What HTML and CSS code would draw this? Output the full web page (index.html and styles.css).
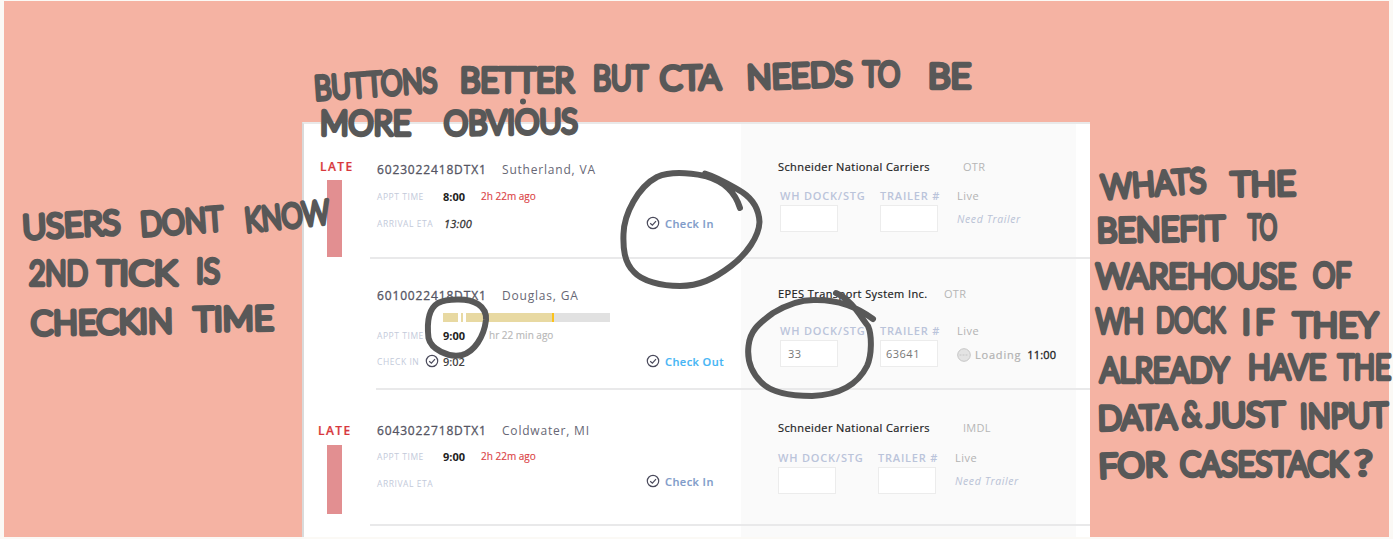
FILE: index.html
```html
<!DOCTYPE html>
<html lang="en">
<head>
<meta charset="utf-8">
<title>Dock schedule review</title>
<link rel="stylesheet" href="styles.css">
</head>
<body>
<svg class="defs" aria-hidden="true">
  <symbol id="tick" viewBox="0 0 14 14"><circle cx="7" cy="7" r="5.7"/><path d="M4.2 7.2 6.4 9.2 10 5.1"/></symbol>
</svg>
<main class="board">
  <section class="panel">
    <article class="row first">
      <div class="status"><span class="late">LATE</span><i class="late-bar"></i></div>
      <div class="info">
        <div class="title"><b>6023022418DTX1</b><span>Sutherland, VA</span></div>
        <div class="line"><span class="label">APPT TIME</span><b class="time">8:00</b><span class="ago">2h 22m ago</span></div>
        <div class="line eta"><span class="label">ARRIVAL ETA</span><em>13:00</em></div>
      </div>
      <div class="action"><svg class="tick"><use href="#tick"/></svg><a>Check In</a></div>
      <div class="carrier">
        <div class="name"><b>Schneider National Carriers</b><span>OTR</span></div>
        <div class="fields">
          <label>WH DOCK/STG<span class="box"></span></label>
          <label>TRAILER #<span class="box"></span></label>
          <div class="load"><span>Live</span><em>Need Trailer</em></div>
        </div>
      </div>
    </article>
    <article class="row second">
      <div class="status"></div>
      <div class="info">
        <div class="title"><b>6010022418DTX1</b><span>Douglas, GA</span></div>
        <div class="progress"><i class="p1"></i><i class="p2"></i><i class="p3"></i><i class="p4"></i></div>
        <div class="line"><span class="label">APPT TIME</span><b class="time">9:00</b><span class="ago muted">hr 22 min ago</span></div>
        <div class="line checked"><span class="label">CHECK IN</span><svg class="tick"><use href="#tick"/></svg><b class="time soft">9:02</b></div>
      </div>
      <div class="action"><svg class="tick"><use href="#tick"/></svg><a class="out">Check Out</a></div>
      <div class="carrier">
        <div class="name"><b>EPES Transport System Inc.</b><span>OTR</span></div>
        <div class="fields">
          <label>WH DOCK/STG<span class="box">33</span></label>
          <label>TRAILER #<span class="box num">63641</span></label>
          <div class="load"><span>Live</span><div class="loading"><svg class="globe" viewBox="0 0 14 14"><circle cx="7" cy="7" r="6.3"/><path d="M2.5 7h9" stroke-dasharray="2 1"/></svg><span>Loading</span><b>11:00</b></div></div>
        </div>
      </div>
    </article>
    <article class="row third">
      <div class="status"><span class="late">LATE</span><i class="late-bar"></i></div>
      <div class="info">
        <div class="title"><b>6043022718DTX1</b><span>Coldwater, MI</span></div>
        <div class="line"><span class="label">APPT TIME</span><b class="time">9:00</b><span class="ago">2h 22m ago</span></div>
        <div class="line eta"><span class="label">ARRIVAL ETA</span></div>
      </div>
      <div class="action"><svg class="tick"><use href="#tick"/></svg><a>Check In</a></div>
      <div class="carrier">
        <div class="name"><b>Schneider National Carriers</b><span>IMDL</span></div>
        <div class="fields">
          <label>WH DOCK/STG<span class="box"></span></label>
          <label>TRAILER #<span class="box"></span></label>
          <div class="load"><span>Live</span><em>Need Trailer</em></div>
        </div>
      </div>
    </article>
    <div class="row tail"></div>
  </section>
</main>
<svg class="notes" viewBox="0 0 1393 539">
  <g class="ink">
    <path d="M705 173.500C720 178 733 187 742 192C754 200 759 211 759.500 222C759 236 747 254 731 266C714 279 699 286 680 286C661 286 642 281 634 272C624 262 623 248 623.500 234C624 214 638 187 657 177C671 171 690 173 705 176C725 182 735 192 740 208"/>
    <path d="M457 299.500C474 299 487 306 486 320C484 337 474 352 462 355C448 358 431 349 428.500 338C427 325 428 309 438 303C444 300 450 299.500 457 299.500"/>
    <path d="M836 293C852 300 860 316 868 326C872 335 872 355 867 366C857 386 837 395 812 396C790 396 771 393 761 382C751 372 747 359 748.500 346C750 331 758 324 773 313C786 305 801 299 817 300C840 300 857 307 873 319"/>
    <path d="M523 101.500v.1"/>
  </g>
  <g class="hand">
    <text transform="translate(315 100) rotate(-4)" textLength="123" lengthAdjust="spacingAndGlyphs">BUTTONS</text>
    <text transform="translate(460 92)" textLength="114" lengthAdjust="spacingAndGlyphs">BETTER</text>
    <text transform="translate(593 90)" textLength="55" lengthAdjust="spacingAndGlyphs">BUT</text>
    <text transform="translate(660 90) rotate(-1)" textLength="61" lengthAdjust="spacingAndGlyphs">CTA</text>
    <text transform="translate(747 89) rotate(-2)" textLength="106" lengthAdjust="spacingAndGlyphs">NEEDS</text>
    <text transform="translate(863 86)" textLength="37" lengthAdjust="spacingAndGlyphs">TO</text>
    <text transform="translate(928 88)" textLength="43" lengthAdjust="spacingAndGlyphs">BE</text>
    <text transform="translate(320 135)" textLength="91" lengthAdjust="spacingAndGlyphs">MORE</text>
    <text transform="translate(444 135) rotate(-1)" textLength="134" lengthAdjust="spacingAndGlyphs">OBVIOUS</text>
    <text transform="translate(23 239) rotate(-3)" textLength="98" lengthAdjust="spacingAndGlyphs">USERS</text>
    <text transform="translate(141 236) rotate(-4)" textLength="83" lengthAdjust="spacingAndGlyphs">DONT</text>
    <text transform="translate(246 232) rotate(-6)" textLength="85" lengthAdjust="spacingAndGlyphs">KNOW</text>
    <text transform="translate(29 285)" textLength="59" lengthAdjust="spacingAndGlyphs">2ND</text>
    <text transform="translate(98 285)" textLength="79" lengthAdjust="spacingAndGlyphs">TICK</text>
    <text transform="translate(196 283)" textLength="24" lengthAdjust="spacingAndGlyphs">IS</text>
    <text transform="translate(31 335) rotate(-1)" textLength="142" lengthAdjust="spacingAndGlyphs">CHECKIN</text>
    <text transform="translate(194 331) rotate(-1)" textLength="80" lengthAdjust="spacingAndGlyphs">TIME</text>
    <text transform="translate(1102 199) rotate(-4)" textLength="105" lengthAdjust="spacingAndGlyphs">WHATS</text>
    <text transform="translate(1231 196) rotate(-1)" textLength="65" lengthAdjust="spacingAndGlyphs">THE</text>
    <text transform="translate(1097 242) rotate(-1)" textLength="128" lengthAdjust="spacingAndGlyphs">BENEFIT</text>
    <text transform="translate(1248 239)" textLength="29" lengthAdjust="spacingAndGlyphs">TO</text>
    <text transform="translate(1096 288)" textLength="200" lengthAdjust="spacingAndGlyphs">WAREHOUSE</text>
    <text transform="translate(1313 287)" textLength="38" lengthAdjust="spacingAndGlyphs">OF</text>
    <text transform="translate(1096 333)" textLength="48" lengthAdjust="spacingAndGlyphs">WH</text>
    <text transform="translate(1156 332)" textLength="69" lengthAdjust="spacingAndGlyphs">DOCK</text>
    <text transform="translate(1242 334)" textLength="32">IF</text>
    <text transform="translate(1293 337)" textLength="85" lengthAdjust="spacingAndGlyphs">THEY</text>
    <text transform="translate(1100 382)" textLength="129" lengthAdjust="spacingAndGlyphs">ALREADY</text>
    <text transform="translate(1248 379)" textLength="78" lengthAdjust="spacingAndGlyphs">HAVE</text>
    <text transform="translate(1338 379)" textLength="53" lengthAdjust="spacingAndGlyphs">THE</text>
    <text transform="translate(1098 430) rotate(-1)" textLength="79" lengthAdjust="spacingAndGlyphs">DATA</text>
    <text transform="translate(1182 426)" textLength="19" lengthAdjust="spacingAndGlyphs">&amp;</text>
    <text transform="translate(1207 427) rotate(-1)" textLength="78" lengthAdjust="spacingAndGlyphs">JUST</text>
    <text transform="translate(1300 428) rotate(-1)" textLength="88" lengthAdjust="spacingAndGlyphs">INPUT</text>
    <text transform="translate(1099 478) rotate(-2)" textLength="67" lengthAdjust="spacingAndGlyphs">FOR</text>
    <text transform="translate(1180 476)" textLength="168" lengthAdjust="spacingAndGlyphs">CASESTACK</text>
    <text transform="translate(1355 475)" textLength="17" lengthAdjust="spacingAndGlyphs">?</text>
  </g>
</svg>
</body>
</html>
```

FILE: styles.css
```css
* { box-sizing: border-box; }
body { margin: 0; width: 1393px; height: 539px; overflow: hidden; background: #fbf9f5; padding: 1px 4px 2px; font-family: "Open Sans", sans-serif; position: relative; }
.defs { display: block; width: 0; height: 0; position: absolute; }
.board { height: 536px; background: #f5b3a3; padding: 121px 299px 0 298px; }
.panel { height: 415px; width: 788px; background: #fff; border-left: 2px solid #dadada; border-top: 2px solid #e9e9e9; display: flex; flex-direction: column; overflow: hidden; }
.row { display: grid; grid-template-columns: 66px 276px 95px 335px; height: 135px; flex: none; position: relative; background: linear-gradient(#fafafa, #fafafa) 437px 0 / 335px 100% no-repeat; }
.second { height: 131px; }
.third { height: 136px; }
.tail { height: 11px; }
.row:not(.tail)::after { content: ""; position: absolute; left: 66px; right: 0; bottom: 0; height: 2px; background: #e9e9ea; }
.second::after { left: 72px !important; }

.status { padding: 35px 0 0 16px; }
.late { display: block; font-size: 12px; line-height: 16px; letter-spacing: 1.4px; font-weight: 600; color: #d8383c; -webkit-text-stroke: .2px; }
.late-bar { display: block; width: 15px; height: 77px; margin: 5px 0 0 7px; background: #e28f91; }
.third .status { padding: 33px 0 0 14px; }
.third .late-bar { height: 69px; margin: 6px 0 0 9px; }

.info { padding: 38px 0 0 7px; }
.title { display: flex; line-height: 16px; font-size: 12px; color: #676775; white-space: nowrap; }
.title b { width: 125px; font-weight: 500; letter-spacing: .85px; color: #555563; -webkit-text-stroke: .3px; }
.title span { letter-spacing: .8px; }
.line { display: flex; align-items: center; height: 16px; margin-top: 10px; font-size: 10.5px; white-space: nowrap; }
.line.eta { margin-top: 11px; }
.label { width: 66px; font-size: 8.5px; letter-spacing: .55px; color: #c3cada; }
.time { width: 38px; font-size: 11px; font-weight: 700; color: #222; }
.line em { font-size: 11px; font-weight: 500; color: #333; padding-left: 1px; letter-spacing: .2px; -webkit-text-stroke: .3px; }
.ago { font-size: 10px; color: #db4447; letter-spacing: 0; -webkit-text-stroke: .15px; }
.second .info { padding-top: 29px; }
.progress { display: flex; width: 167px; height: 9px; margin: 9px 0 0 66px; background: #e1e1e1; }
.p1, .p2, .p3 { background: #e8d9a2; border-right: 3px solid #fff; }
.p1 { width: 18px; }
.p2 { width: 5px; }
.p3 { width: 86px; border: 0; }
.p4 { width: 2px; background: #fcc21b; }
.second .line { margin-top: 5px; }
.second .line.checked { margin-top: 10px; }
.muted { color: #b8b8b8; padding-left: 8px; }
.checked .label { width: 48px; }
.checked .tick { margin-right: 4px; }
.soft { font-weight: 600; color: #444; }
.third .info { padding-top: 33px; }
.third .title + .line { margin-top: 9px; }

.tick { width: 14px; height: 14px; flex: none; fill: none; stroke: #4b4b5c; stroke-width: 1.2; }
.action { display: flex; align-items: center; height: 16px; margin-top: 91px; font-size: 11px; font-weight: 600; letter-spacing: .45px; white-space: nowrap; }
.action a { margin-left: 5px; color: #7f9cca; -webkit-text-stroke: .15px; }
.second .action { margin-top: 94px; }
.third .action { margin-top: 83px; }
.action .out { color: #45b5f5; }

.carrier { padding: 35px 0 0 37px; }
.name { display: flex; line-height: 16px; font-size: 11px; white-space: nowrap; }
.name b { width: 185px; font-weight: 500; letter-spacing: .41px; color: #222; -webkit-text-stroke: .2px; }
.name span { color: #b6b6b6; letter-spacing: .3px; }
.fields { display: grid; grid-template-columns: 100px 77px auto; padding-left: 2px; margin-top: 13px; }
label { font-size: 11px; line-height: 16px; font-weight: 600; letter-spacing: .8px; color: #bac4da; white-space: nowrap; }
.box { display: block; width: 58px; height: 27px; margin-top: 1px; border: 1px solid #ececec; background: #fff; font-size: 11px; line-height: 26px; font-weight: 500; letter-spacing: .5px; color: #777; padding-left: 7px; }
.box.num { padding-left: 5px; }
.load { font-size: 11px; line-height: 16px; letter-spacing: .5px; color: #b2b2b2; }
.load em { display: block; margin-top: 7px; font-size: 10.5px; letter-spacing: .6px; color: #b9c2d6; white-space: nowrap; }
.second .carrier { padding-top: 27px; }
.second .name b { width: 166px; }
.second .fields { margin-top: 21px; }
.loading { display: flex; align-items: center; margin-top: 8px; white-space: nowrap; }
.loading span { margin-left: 4px; letter-spacing: .8px; font-weight: 500; -webkit-text-stroke: .2px; }
.loading b { margin-left: 6px; font-weight: 500; color: #222; letter-spacing: .2px; -webkit-text-stroke: .3px; }
.globe { width: 14px; height: 14px; fill: #e3e3e3; stroke: #c5c5c5; }
.third .carrier { padding-top: 30px; }
.third .fields { padding-left: 0; margin-top: 14px; }

.notes { position: absolute; left: 0; top: 0; width: 1393px; height: 539px; }
.ink { fill: none; stroke: #585858; stroke-width: 6; stroke-linecap: round; stroke-linejoin: round; }
.hand { font-family: Lato, sans-serif; font-weight: 300; font-size: 33px; fill: #585858; stroke: #585858; stroke-width: 4.5; stroke-linejoin: round; stroke-linecap: round; }
```
